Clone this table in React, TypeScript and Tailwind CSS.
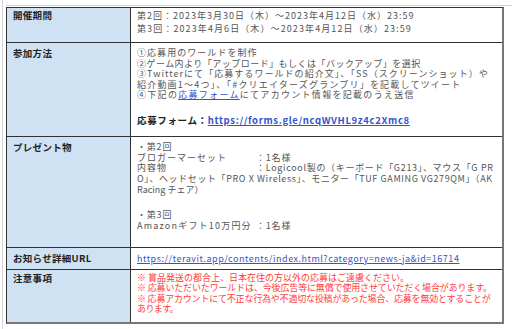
import React from "react";

const Link = ({ children, bold }: { children: React.ReactNode; bold?: boolean }) => (
  <span className={`text-[#3355cc] underline ${bold ? "font-bold" : ""}`}>{children}</span>
);

const Label = ({ children, className = "" }: { children: React.ReactNode; className?: string }) => (
  <div className={`w-[124px] shrink-0 bg-[#cfe2f3] border-r border-[#333] pl-[6px] font-bold text-[9.5px] tracking-[0.3px] text-[#222] ${className}`}>
    {children}
  </div>
);

const L = ({ children, className = "" }: { children?: React.ReactNode; className?: string }) => (
  <div className={`whitespace-nowrap ${className}`}>{children ?? "\u00a0"}</div>
);

const Item = ({ label, value, t1, t2 }: { label: string; value: React.ReactNode; t1: string; t2: string }) => (
  <div className="flex whitespace-nowrap">
    <span className={`w-[119px] shrink-0 ${t1}`}>{label}</span>
    <span className={t2}>{value}</span>
  </div>
);

export default function App() {
  return (
    <div className="w-[512px] h-[329px] bg-white overflow-hidden pl-[2px] font-['Noto_Sans_CJK_JP',sans-serif]">
      <div className="h-full border-l border-[#d6d6d6] pl-[3px] pt-[5px]">
        <div className="border-t border-[#d0d0d0] pt-[1px]">
          <div className="w-[498px] border-t border-l border-[#333] border-r-2 border-b-2 border-r-[#777] border-b-[#777]">
            {/* Row 1 */}
            <div className="flex h-[35px] border-b border-[#333]">
              <Label className="pt-[1px] leading-[13px]">開催期間</Label>
              <div className="flex-1 pl-[6px] pt-[1px] text-[9px] text-[#555] leading-[13px]">
                <L className="tracking-[1px]">第2回：2023年3月30日（木）～2023年4月12日（水）23:59</L>
                <L className="tracking-[1.1px]">第3回：2023年4月6日（木）～2023年4月12日（水）23:59</L>
              </div>
            </div>
            {/* Row 2 */}
            <div className="flex h-[94px] border-b border-[#333]">
              <Label className="pt-[5px] leading-[10.5px]">参加方法</Label>
              <div className="flex-1 pl-[6px] pt-[5px] text-[9px] text-[#555] leading-[10.5px] overflow-hidden">
                <L className="tracking-[1.05px]">①応募用のワールドを制作</L>
                <L className="tracking-[0.47px]">②ゲーム内より「アップロード」もしくは「バックアップ」を選択</L>
                <L className="tracking-[1.05px]">③Twitterにて「応募するワールドの紹介文」、「SS（スクリーンショット）や</L>
                <L className="tracking-[1.2px]">紹介動画1～4つ」、「#クリエイターズグランプリ」を記載してツイート</L>
                <L className="tracking-[1.3px]">
                  ④下記の<Link>応募フォーム</Link>にてアカウント情報を記載のうえ送信
                </L>
                <div className="mt-[14px] whitespace-nowrap font-bold text-[9.5px] text-[#222] leading-[11px] tracking-[0.65px]">
                  応募フォーム：<Link bold>https://forms.gle/ncqWVHL9z4c2Xmc8</Link>
                </div>
              </div>
            </div>
            {/* Row 3 */}
            <div className="flex h-[111px] border-b border-[#333]">
              <Label className="pt-[5px] leading-[10.7px]">プレゼント物</Label>
              <div className="flex-1 pl-[6px] pt-[5px] text-[9px] text-[#555] leading-[10.7px] overflow-hidden">
                <L className="tracking-[0.8px]">・第2回</L>
                <Item label="ブロガーマーセット" value="：1名様" t1="tracking-[1px]" t2="tracking-[0.8px]" />
                <Item
                  label="内容物"
                  value="：Logicool製の（キーボード「G213」、マウス「G PR"
                  t1="tracking-[1px]"
                  t2="tracking-[0.68px]"
                />
                <L className="tracking-[0.6px]">O」、ヘッドセット「PRO X Wireless」、モニター「TUF GAMING VG279QM」（AK</L>
                <L className="tracking-[0px]">Racing チェア）</L>
                <L className="mt-[14.5px] tracking-[0.8px]">・第3回</L>
                <Item label="Amazonギフト10万円分" value="：1名様" t1="tracking-[1.2px]" t2="tracking-[0.8px]" />
              </div>
            </div>
            {/* Row 4 */}
            <div className="flex h-[22px] border-b border-[#333]">
              <Label className="flex items-center">お知らせ詳細URL</Label>
              <div className="flex-1 pl-[6px] flex items-center text-[9px] tracking-[0.52px]">
                <Link>https://teravit.app/contents/index.html?category=news-ja&amp;id=16714</Link>
              </div>
            </div>
            {/* Row 5 */}
            <div className="flex h-[52px]">
              <Label className="pt-[3px] leading-[10.3px]">注意事項</Label>
              <div className="flex-1 pl-[6px] pt-[3px] text-[9px] text-[#ff3b3b] leading-[10.3px] overflow-hidden">
                <L className="tracking-[0px]">※ 賞品発送の都合上、日本在住の方以外の応募はご遠慮ください。</L>
                <L className="tracking-[-0.15px]">※ 応募いただいたワールドは、今後広告等に無償で使用させていただく場合があります。</L>
                <L className="tracking-[-0.2px]">※ 応募アカウントにて不正な行為や不適切な投稿があった場合、応募を無効とすることが</L>
                <L className="tracking-[-0.6px]">あります。</L>
              </div>
            </div>
          </div>
        </div>
      </div>
    </div>
  );
}
